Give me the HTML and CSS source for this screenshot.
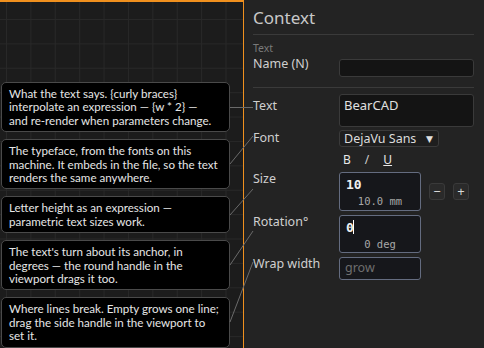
FILE: index.html
```html
<!DOCTYPE html>
<html>
<head>
<meta charset="utf-8">
<title>Context</title>
<link rel="stylesheet" href="styles.css">
</head>
<body>
<div class="app">
  <div class="viewport">
    <div class="tips">
      <div class="tip">What the text says. {curly braces}<br>interpolate an expression — {w * 2} —<br>and re-render when parameters change.</div>
      <div class="tip">The typeface, from the fonts on this<br>machine. It embeds in the file, so the text<br>renders the same anywhere.</div>
      <div class="tip">Letter height as an expression —<br>parametric text sizes work.</div>
      <div class="tip">The text's turn about its anchor, in<br>degrees — the round handle in the<br>viewport drags it too.</div>
      <div class="tip">Where lines break. Empty grows one line;<br>drag the side handle in the viewport to<br>set it.</div>
    </div>
  </div>

  <div class="panel">
    <h1 class="title">Context</h1>
    <div class="rule"></div>
    <div class="section">Text</div>
    <div class="row">
      <label class="lbl">Name (N)</label>
      <div class="field name-field"></div>
    </div>
    <div class="rule rule2"></div>
    <div class="row row-text">
      <label class="lbl">Text</label>
      <div class="field text-field">BearCAD</div>
    </div>
    <div class="row row-font">
      <label class="lbl">Font</label>
      <div class="select">DejaVu Sans <span class="arrow">&#9660;</span></div>
    </div>
    <div class="row row-style">
      <span></span>
      <div class="styles"><b>B</b><i>/</i><u>U</u></div>
    </div>
    <div class="row row-size">
      <label class="lbl">Size</label>
      <div class="num-wrap">
        <div class="num"><span class="val">10</span><span class="sub">10.0 mm</span></div>
        <div class="btns"><span class="btn">&minus;</span><span class="btn">+</span></div>
      </div>
    </div>
    <div class="row row-rot">
      <label class="lbl">Rotation°</label>
      <div class="num"><span class="val">0<span class="caret"></span></span><span class="sub">0 deg</span></div>
    </div>
    <div class="row row-wrap">
      <label class="lbl">Wrap width</label>
      <div class="num wrapw">grow</div>
    </div>
  </div>

  <svg class="leaders" width="484" height="348" viewBox="0 0 484 348">
    <line x1="230" y1="107.5" x2="253" y2="107.5"/>
    <line x1="230" y1="164" x2="253" y2="136"/>
    <line x1="230" y1="215" x2="253" y2="189"/>
    <line x1="230" y1="265" x2="253" y2="231"/>
    <line x1="230" y1="322" x2="253" y2="262"/>
  </svg>
</div>
</body>
</html>
```
FILE: styles.css
```css
html, body { margin:0; padding:0; }
body { background:#232323; font-family:"Noto Sans", "DejaVu Sans", sans-serif; color:#d0d0d0; }

.app { position:relative; width:484px; height:348px; display:flex; overflow:hidden; }

.viewport {
  width:243px; height:346px;
  border-top:2px solid #f0901e; border-right:1px solid #f0901e;
  background-color:#1c1c1c;
  background-image:
    linear-gradient(to right, #282828 1px, transparent 1px),
    linear-gradient(to bottom, #282828 1px, transparent 1px);
  background-size:24.4px 24.4px;
  background-position:6px 17px;
}
.tips { display:flex; flex-direction:column; gap:7px; padding:80px 0 0 1px; width:229px; }
.tip {
  background:#000; border:1px solid #4a4a4a; border-radius:5px;
  padding:4px 4px 4px 7px; font-family:Lato, "Noto Sans", sans-serif; font-size:11.6px; line-height:13.4px;
  color:#e6e6e6; white-space:nowrap;
}

.panel { flex:1; padding:0 10px 0 9px; background:#232323; }
.title { margin:0; padding-top:7px; font-size:17px; line-height:21px; font-weight:normal; color:#c8c8c8; }
.rule { height:1px; background:#3a3a3a; margin-top:6px; }
.rule2 { margin-top:10px; }
.section { font-size:10.5px; color:#7a7a7a; margin-top:7px; line-height:13px; }

.row { display:grid; grid-template-columns:86px 1fr; align-items:start; }
.lbl { font-size:12.5px; color:#cfcfcf; line-height:16px; padding-top:1px; white-space:nowrap; }

.field { background:#141414; border:1px solid #3a3a3a; border-radius:3px; box-sizing:border-box; }
.name-field { height:18px; margin-top:4px; }
.row-text { margin-top:6px; }
.row-text .lbl { padding-top:4px; }
.text-field { height:33px; font-size:13px; padding:2px 4px; color:#e0e0e0; line-height:17px; }

.row-font { margin-top:3px; }
.row-font .lbl { padding-top:0; }
.select {
  width:100px; height:17px; box-sizing:border-box; background:#1e1e1e; border:1px solid #3a3a3a; border-radius:3px;
  font-size:12.5px; line-height:15px; padding-left:4px; color:#dcdcdc; display:flex; justify-content:space-between; padding-right:5px;
}
.arrow { font-size:9px; color:#e0e0e0; }

.row-style { height:25px; }
.styles { display:flex; gap:14px; font-size:12px; padding:6px 0 0 4px; color:#e8e8e8; line-height:14px; }
.styles b { font-weight:normal; }
.styles i { font-style:normal; color:#cfcfcf; }

.num-wrap { display:flex; align-items:center; gap:8px; }
.num {
  width:82px; box-sizing:border-box; background:#16171b; border:1px solid #646c80; border-radius:3px;
  font-family:"DejaVu Sans Mono", monospace; display:flex; flex-direction:column; padding:4px 6px 3px;
}
.row-size .num { height:39px; }
.row-size .lbl, .row-rot .lbl, .row-wrap .lbl { padding-top:0; margin-top:-1px; }
.val { font-size:13px; font-weight:bold; color:#f0f0f0; line-height:15px; position:relative; }
.sub { font-size:10.5px; color:#a8a8a8; text-align:center; line-height:14px; margin-top:2px; }
.caret { display:inline-block; width:1px; height:14px; background:#fff; vertical-align:top; margin-left:-1px; }

.btns { display:flex; gap:8px; }
.btn {
  width:16px; height:17px; box-sizing:border-box; border:1px solid #3a3a3a; background:#2a2a2a; border-radius:3px;
  font-size:13px; line-height:14px; text-align:center; color:#d8d8d8;
}

.row-rot { margin-top:4px; }
.row-rot .num { height:38px; }
.row-wrap { margin-top:4px; }
.wrapw { height:23px; font-family:"Noto Sans", sans-serif; font-size:12.5px; color:#6e6e6e; padding:2px 5px; line-height:16px; }

.leaders { position:absolute; left:0; top:0; pointer-events:none; }
.leaders line { stroke:#6a6a6a; stroke-width:1; }
```
